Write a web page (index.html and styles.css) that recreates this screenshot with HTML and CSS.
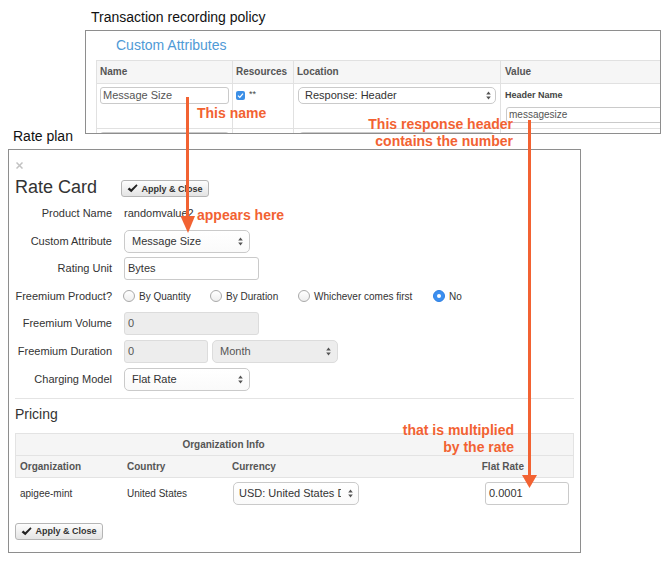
FILE: index.html
```html
<!DOCTYPE html>
<html>
<head>
<meta charset="utf-8">
<title>Rate plan custom attribute</title>
<link rel="stylesheet" href="styles.css">
</head>
<body>
<div class="page">
  <section class="policy">
    <div class="caption policy-caption">Transaction recording policy</div>
    <div class="policy-shot">
      <div class="ca-title">Custom Attributes</div>
      <div class="ca-table">
        <div class="ca-row ca-head">
          <div class="c">Name</div>
          <div class="c">Resources</div>
          <div class="c">Location</div>
          <div class="c c-val">Value</div>
        </div>
        <div class="ca-row ca-body">
          <div class="c"><div class="fld fld-sm ca-name">Message Size</div></div>
          <div class="c c-res">
            <svg class="cb" width="9" height="9" viewBox="0 0 9 9"><rect width="9" height="9" rx="2" fill="#3c8fe6"/><path d="M2 4.6 L3.8 6.4 L7 2.6" fill="none" stroke="#fff" stroke-width="1.3"/></svg>
            <span class="stars">**</span>
          </div>
          <div class="c"><div class="fld fld-sm sel ca-loc"><span class="sel-text">Response: Header</span><svg class="ud" width="5" height="9" viewBox="0 0 5 9"><path d="M2.5 0.5 L4.8 3.6 L0.2 3.6 Z M2.5 8.5 L4.8 5.4 L0.2 5.4 Z" fill="#555"/></svg></div></div>
          <div class="c c-val">
            <div class="vlabel">Header Name</div>
            <div class="fld ca-value">messagesize</div>
          </div>
        </div>
        <div class="ca-row ca-body">
          <div class="c"><div class="fld fld-sm ca-name"></div></div>
          <div class="c c-res"></div>
          <div class="c"><div class="fld fld-sm sel ca-loc"></div></div>
          <div class="c c-val"></div>
        </div>
      </div>
    </div>
  </section>

  <div class="caption rp-caption">Rate plan</div>
  <section class="rp-shot">
    <svg class="close" width="7" height="7" viewBox="0 0 7 7"><path d="M0.5 0.5 L6.5 6.5 M6.5 0.5 L0.5 6.5" stroke="#c2c2c2" stroke-width="1.5"/></svg>
    <div class="rc-head">
      <div class="rc-title">Rate Card</div>
      <div class="btn"><svg width="11" height="9" viewBox="0 0 11 9"><path d="M0.6 5.2 L2.4 3.5 L4.2 5.3 L9.4 0.3 L10.6 1.6 L4.3 8.3 Z" fill="#222"/></svg><span>Apply &amp; Close</span></div>
    </div>

    <div class="form">
      <div class="lbl">Product Name</div>
      <div class="val">randomvalue2</div>

      <div class="lbl">Custom Attribute</div>
      <div class="ctl"><div class="fld fld-md sel w126"><span class="sel-text">Message Size</span><svg class="ud" width="5" height="9" viewBox="0 0 5 9"><path d="M2.5 0.5 L4.8 3.6 L0.2 3.6 Z M2.5 8.5 L4.8 5.4 L0.2 5.4 Z" fill="#555"/></svg></div></div>

      <div class="lbl">Rating Unit</div>
      <div class="ctl"><div class="fld fld-md w135">Bytes</div></div>

      <div class="lbl">Freemium Product?</div>
      <div class="radios">
        <div class="ropt ropt-1"><span class="radio"></span><span>By Quantity</span></div>
        <div class="ropt ropt-2"><span class="radio"></span><span>By Duration</span></div>
        <div class="ropt ropt-3"><span class="radio"></span><span>Whichever comes first</span></div>
        <div class="ropt"><span class="radio on"></span><span>No</span></div>
      </div>

      <div class="lbl">Freemium Volume</div>
      <div class="ctl"><div class="fld fld-md dis w135">0</div></div>

      <div class="lbl">Freemium Duration</div>
      <div class="ctl">
        <div class="fld fld-md dis w84">0</div>
        <div class="fld fld-md sel dis w126"><span class="sel-text">Month</span><svg class="ud" width="5" height="9" viewBox="0 0 5 9"><path d="M2.5 0.5 L4.8 3.6 L0.2 3.6 Z M2.5 8.5 L4.8 5.4 L0.2 5.4 Z" fill="#555"/></svg></div>
      </div>

      <div class="lbl">Charging Model</div>
      <div class="ctl"><div class="fld fld-md sel w126"><span class="sel-text">Flat Rate</span><svg class="ud" width="5" height="9" viewBox="0 0 5 9"><path d="M2.5 0.5 L4.8 3.6 L0.2 3.6 Z M2.5 8.5 L4.8 5.4 L0.2 5.4 Z" fill="#555"/></svg></div></div>
    </div>

    <div class="rule"></div>
    <div class="pricing-title">Pricing</div>

    <div class="phead">
      <div class="ph1"><div>Organization Info</div><div></div></div>
      <div class="ph2">
        <div class="pad4">Organization</div>
        <div class="pad5">Country</div>
        <div class="pad4">Currency</div>
        <div class="right">Flat Rate</div>
      </div>
    </div>
    <div class="pdata">
      <div class="pad4">apigee-mint</div>
      <div class="pad5">United States</div>
      <div><div class="fld fld-md sel cur"><span class="sel-text cur-text">USD: United States Dollar</span><svg class="ud" width="5" height="9" viewBox="0 0 5 9"><path d="M2.5 0.5 L4.8 3.6 L0.2 3.6 Z M2.5 8.5 L4.8 5.4 L0.2 5.4 Z" fill="#555"/></svg></div></div>
      <div><div class="fld fld-md rate">0.0001</div></div>
    </div>

    <div class="btn btn-bottom"><svg width="11" height="9" viewBox="0 0 11 9"><path d="M0.6 5.2 L2.4 3.5 L4.2 5.3 L9.4 0.3 L10.6 1.6 L4.3 8.3 Z" fill="#222"/></svg><span>Apply &amp; Close</span></div>
  </section>

  <svg class="arrows" width="668" height="563" viewBox="0 0 668 563">
    <line x1="187.5" y1="97" x2="187.5" y2="220" stroke="#f26232" stroke-width="3"/>
    <polygon points="180.5,216 195,216 188,233" fill="#f26232"/>
    <line x1="529.5" y1="120" x2="529.5" y2="478" stroke="#f26232" stroke-width="3"/>
    <polygon points="522,475 537,475 529.5,488" fill="#f26232"/>
  </svg>
  <div class="note note-name">This name</div>
  <div class="note note-here">appears here</div>
  <div class="note note-header">This response header<br>contains the number</div>
  <div class="note note-rate">that is multiplied<br>by the rate</div>
</div>
</body>
</html>
```

FILE: styles.css
```css
* { box-sizing: border-box; }
html, body { margin: 0; padding: 0; background: #fff; }
body { font-family: "Liberation Sans", Arial, Helvetica, sans-serif; color: #333; }

.page { position: relative; width: 668px; height: 563px; overflow: hidden; padding-top: 9px; }

.caption { font-size: 14px; line-height: 16px; height: 16px; color: #111; white-space: nowrap; }

/* Transaction recording policy */
.policy { margin-left: 85px; }
.policy-caption { padding-left: 6px; margin-bottom: 5px; }
.policy-shot { width: 576px; height: 104px; border: 1px solid #8e8e8e; overflow: hidden; background: #fff; }
.ca-title { margin: 6px 0 0 30px; font-size: 14px; line-height: 16px; color: #4f9ad6; }
.ca-table { margin: 7px 0 0 10px; width: 720px; border-left: 1px solid #e1e1e1; border-top: 1px solid #e1e1e1; }
.ca-row { display: grid; grid-template-columns: 136px 61px 207px 316px; }
.ca-row .c { border-right: 1px solid #e1e1e1; border-bottom: 1px solid #e1e1e1; padding-left: 3px; }
.ca-row .c-val { padding-left: 4px; }
.ca-head { background: #f6f6f6; }
.ca-head .c { height: 23px; line-height: 22px; font-size: 10px; font-weight: bold; color: #555; }
.ca-body .c { height: 45px; padding-top: 3px; }

.fld { border: 1px solid #cacaca; border-radius: 3px; background: #fff; color: #555; white-space: nowrap; overflow: hidden; }
.fld-sm { height: 17px; font-size: 11px; line-height: 15px; padding-left: 2px; }
.ca-name { width: 129px; }
.ca-loc { width: 198px; margin-left: 1px; padding: 0 4px 0 6px; border-radius: 4px; color: #333; }
.vlabel { margin-top: 1px; font-size: 9px; font-weight: bold; line-height: 14px; color: #444; white-space: nowrap; }
.ca-value { width: 200px; height: 16px; margin-top: 5px; margin-left: 1px; font-size: 10px; line-height: 14px; padding-left: 2px; }
.c-res { display: flex; align-items: flex-start; }
.cb { display: block; margin-top: 4px; }
.stars { font-size: 9px; line-height: 10px; margin: 2px 0 0 4px; color: #444; }

/* Rate plan */
.rp-caption { padding-left: 13px; margin-top: -6px; margin-bottom: 5px; }
.rp-shot { margin-left: 8px; width: 573px; height: 404px; border: 1px solid #8e8e8e; padding: 0 6px; background: #fff; }
.close { display: block; margin: 12px 0 0 1px; }
.rc-head { display: flex; align-items: flex-start; margin-top: 7px; height: 22px; }
.rc-title { width: 106px; font-size: 18px; line-height: 22px; color: #333; white-space: nowrap; }

.btn { display: flex; align-items: center; justify-content: center; gap: 3px; width: 88px; height: 17px; margin-top: 4px; border: 1px solid #b5b5b5; border-radius: 3px; background: linear-gradient(#fdfdfd, #e4e4e4); font-size: 9px; font-weight: bold; color: #333; white-space: nowrap; }
.btn svg { display: block; }
.btn-bottom { margin-top: 14px; }

.form { margin-top: 4px; display: grid; grid-template-columns: 97px 1fr; column-gap: 12px; row-gap: 4.6px; grid-auto-rows: 23px; }
.lbl { text-align: right; font-size: 11px; line-height: 23px; color: #333; white-space: nowrap; }
.val { font-size: 11px; line-height: 23px; color: #333; }
.ctl { display: flex; gap: 4px; align-items: center; }
.fld-md { height: 23px; font-size: 11px; line-height: 21px; padding-left: 3px; color: #333; }
.w135 { width: 135px; }
.w126 { width: 126px; }
.w84 { width: 84px; }
.sel { display: flex; align-items: center; border-radius: 5px; }
.fld-md.sel { padding: 0 6px 0 7px; background: linear-gradient(#fff, #fafafa); }
.sel-text { flex: 1; min-width: 0; overflow: hidden; white-space: nowrap; }
.ud { display: block; flex: none; }
.fld.dis { background: #ededed; border-color: #dcdcdc; color: #555; }

.radios { display: flex; align-items: center; margin-left: -1px; font-size: 10px; color: #333; white-space: nowrap; }
.ropt { display: flex; align-items: center; gap: 4px; }
.ropt-1 { width: 87px; }
.ropt-2 { width: 88px; }
.ropt-3 { width: 135px; }
.radio { width: 12px; height: 12px; border: 1px solid #a9a9a9; border-radius: 50%; background: linear-gradient(#fff, #eeeeee); flex: none; }
.radio.on { background: #3b8ff0; border-color: #2f80e2; display: flex; align-items: center; justify-content: center; }
.radio.on::after { content: ""; width: 4px; height: 4px; border-radius: 50%; background: #fff; }

.rule { height: 1px; background: #e4e4e4; margin-top: 7px; }
.pricing-title { margin-top: 7px; font-size: 14px; line-height: 16px; color: #333; }

.phead { margin-top: 11px; border: 1px solid #e3e3e3; background: #f5f5f5; font-size: 10px; font-weight: bold; color: #555; white-space: nowrap; }
.ph1 { display: grid; grid-template-columns: 415px 1fr; height: 22px; line-height: 21px; border-bottom: 1px solid #e3e3e3; text-align: center; }
.ph2, .pdata { display: grid; grid-template-columns: 106px 106px 203px 1fr; }
.ph2 { height: 21px; line-height: 21px; }
.pad4 { padding-left: 4px; }
.pad5 { padding-left: 5px; }
.right { text-align: right; padding-right: 49px; }
.pdata { padding: 4px 1px; height: 31px; font-size: 10px; line-height: 23px; color: #333; white-space: nowrap; }
.pdata .cur { width: 126px; margin-left: 5px; padding: 0 5px 0 5px; justify-content: space-between; }
.cur-text { flex: none; width: 102px; }
.pdata .rate { width: 84px; margin-left: 54px; }

/* annotations */
.arrows { position: absolute; left: 0; top: 0; pointer-events: none; }
.note { position: absolute; font-size: 14px; font-weight: bold; color: #f26232; line-height: 16px; white-space: nowrap; }
.note-name { left: 197px; top: 105px; }
.note-here { left: 197px; top: 207px; }
.note-header { right: 155px; top: 116px; line-height: 17px; text-align: right; }
.note-rate { right: 154px; top: 422px; line-height: 17px; text-align: right; }
```
